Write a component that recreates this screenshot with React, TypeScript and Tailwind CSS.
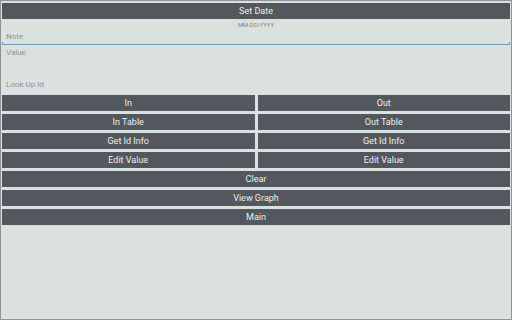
const btn =
  "flex h-[16px] items-center justify-center bg-[#53585d] text-[9px] leading-none text-[#eceeee]";

function Btn({ label }: { label: string }) {
  return <div className={btn}>{label}</div>;
}

export default function App() {
  return (
    <div
      className="flex h-[320px] w-[512px] flex-col border border-[#8e9594] bg-[#d9e2df] px-px pt-[2px]"
      style={{ fontFamily: "Roboto, 'Noto Sans', sans-serif" }}
    >
      <Btn label="Set Date" />

      <div className="flex h-[12px] items-center justify-center text-[6px] leading-none text-[#7d8483]">
        MM-DD-YYYY
      </div>

      <div className="flex h-[14px] flex-col">
        <div className="flex flex-1 items-center px-1 text-[8px] leading-none text-[#8d9392]">
          Note
        </div>
        <div className="h-[3px] border-x border-b border-[#4c9fd2]" />
      </div>

      <div className="h-[32px] px-1 pt-[4px] text-[8px] leading-none text-[#8d9392]">
        Value
      </div>

      <div className="flex h-[16px] items-center px-1 text-[8px] leading-none text-[#8d9392]">
        Look Up Id
      </div>

      <div className="mt-[2px] grid grid-cols-2 gap-x-[3px] gap-y-[3px]">
        <Btn label="In" />
        <Btn label="Out" />
        <Btn label="In Table" />
        <Btn label="Out Table" />
        <Btn label="Get Id Info" />
        <Btn label="Get Id Info" />
        <Btn label="Edit Value" />
        <Btn label="Edit Value" />
      </div>

      <div className="mt-[3px] flex flex-col gap-[3px]">
        <Btn label="Clear" />
        <Btn label="View Graph" />
        <Btn label="Main" />
      </div>
    </div>
  );
}
